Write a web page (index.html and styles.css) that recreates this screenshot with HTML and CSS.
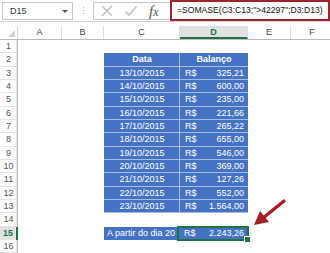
FILE: index.html
```html
<!DOCTYPE html>
<html lang="pt">

<head>
    <title>SOMASE</title>
    <meta charset="UTF-8">
    <meta name="viewport" content="width=device-width, initial-scale=1">
    <link rel="stylesheet" href="styles.css">
</head>

<body>
    <!-- barra de fórmulas -->
    <div class="toolbar">
        <div class="namebox">D15<span class="drop"></span></div>
        <div class="grip"></div>
        <div class="buttons">
            <svg class="icon" width="14" height="14" viewBox="0 0 14 14">
                <path d="M2 2 L12 12 M12 2 L2 12" stroke="#c2c2c2" stroke-width="1.6" fill="none" />
            </svg>
            <svg class="icon" width="14" height="14" viewBox="0 0 14 14">
                <path d="M1.5 7.5 L5 11 L12.5 2.5" stroke="#c2c2c2" stroke-width="1.6" fill="none" />
            </svg>
            <span class="fx">f<span class="x">x</span></span>
        </div>
        <div class="formula">=SOMASE(C3:C13;"&gt;42297";D3:D13)</div>
    </div>

    <div class="sheet">
        <div class="row head">
            <div class="corner"></div>
            <div class="col">A</div>
            <div class="col">B</div>
            <div class="col">C</div>
            <div class="col sel">D</div>
            <div class="col">E</div>
            <div class="col">F</div>
        </div>
        <div class="row">
            <div class="num">1</div><div></div><div></div><div></div><div></div><div></div><div></div>
        </div>
        <div class="row">
            <div class="num">2</div><div></div><div></div>
            <div class="t th">Data</div>
            <div class="t th last">Balanço</div>
            <div></div><div></div>
        </div>
        <div class="row">
            <div class="num">3</div><div></div><div></div>
            <div class="t date">13/10/2015</div>
            <div class="t money last"><span>R$</span><span>325,21</span></div>
            <div></div><div></div>
        </div>
        <div class="row">
            <div class="num">4</div><div></div><div></div>
            <div class="t date">14/10/2015</div>
            <div class="t money last"><span>R$</span><span>600,00</span></div>
            <div></div><div></div>
        </div>
        <div class="row">
            <div class="num">5</div><div></div><div></div>
            <div class="t date">15/10/2015</div>
            <div class="t money last"><span>R$</span><span>235,00</span></div>
            <div></div><div></div>
        </div>
        <div class="row">
            <div class="num">6</div><div></div><div></div>
            <div class="t date">16/10/2015</div>
            <div class="t money last"><span>R$</span><span>221,66</span></div>
            <div></div><div></div>
        </div>
        <div class="row">
            <div class="num">7</div><div></div><div></div>
            <div class="t date">17/10/2015</div>
            <div class="t money last"><span>R$</span><span>265,22</span></div>
            <div></div><div></div>
        </div>
        <div class="row">
            <div class="num">8</div><div></div><div></div>
            <div class="t date">18/10/2015</div>
            <div class="t money last"><span>R$</span><span>655,00</span></div>
            <div></div><div></div>
        </div>
        <div class="row">
            <div class="num">9</div><div></div><div></div>
            <div class="t date">19/10/2015</div>
            <div class="t money last"><span>R$</span><span>546,00</span></div>
            <div></div><div></div>
        </div>
        <div class="row">
            <div class="num">10</div><div></div><div></div>
            <div class="t date">20/10/2015</div>
            <div class="t money last"><span>R$</span><span>369,00</span></div>
            <div></div><div></div>
        </div>
        <div class="row">
            <div class="num">11</div><div></div><div></div>
            <div class="t date">21/10/2015</div>
            <div class="t money last"><span>R$</span><span>127,26</span></div>
            <div></div><div></div>
        </div>
        <div class="row">
            <div class="num">12</div><div></div><div></div>
            <div class="t date">22/10/2015</div>
            <div class="t money last"><span>R$</span><span>552,00</span></div>
            <div></div><div></div>
        </div>
        <div class="row">
            <div class="num">13</div><div></div><div></div>
            <div class="t date">23/10/2015</div>
            <div class="t money last"><span>R$</span><span>1.564,00</span></div>
            <div></div><div></div>
        </div>
        <div class="row">
            <div class="num">14</div><div></div><div></div><div></div><div></div><div></div><div></div>
        </div>
        <div class="row">
            <div class="num active">15</div><div></div><div></div>
            <div class="fill label">A partir do dia 20</div>
            <div class="fill money current"><span>R$</span><span>2.243,26</span></div>
            <div></div><div></div>
        </div>
        <div class="row">
            <div class="num">16</div><div></div><div></div><div></div><div></div><div></div><div></div>
        </div>
    </div>

    <!-- seta desenhada por cima da planilha -->
    <svg class="arrow" width="330" height="253" viewBox="0 0 330 253">
        <line x1="284" y1="201" x2="263" y2="218" stroke="#a51f25" stroke-width="3.4" stroke-linecap="round" />
        <polygon points="254,225 269,222 260,211" fill="#a51f25" />
    </svg>
</body>

</html>
```

FILE: styles.css
```css
* {
    margin: 0px;
    padding: 0px;
    box-sizing: border-box;
}

body {
    width: 330px;
    height: 253px;
    overflow: hidden;
    position: relative;
    background: #fff;
    font-family: "Liberation Sans", Arial, sans-serif;
    font-size: 9px;
    color: #222;
}

/* barra de fórmulas */
.toolbar {
    display: flex;
    align-items: flex-start;
    height: 22px;
    border-bottom: 1px solid #d4d4d4;
}

.namebox {
    width: 71px;
    height: 18px;
    margin: 2px 0 0 2px;
    border: 1px solid #c6c6c6;
    display: flex;
    align-items: center;
    justify-content: space-between;
    padding: 0 4px 0 7px;
    color: #333;
}

.drop {
    border-left: 3px solid transparent;
    border-right: 3px solid transparent;
    border-top: 3px solid #555;
}

.grip {
    width: 20px;
    height: 9px;
    margin-top: 7px;
    background: linear-gradient(to right, transparent 10px, #a8a8a8 10px, #a8a8a8 11px, transparent 11px);
    -webkit-mask: repeating-linear-gradient(to bottom, #000 0 1px, transparent 1px 3px);
    mask: repeating-linear-gradient(to bottom, #000 0 1px, transparent 1px 3px);
}

.buttons {
    width: 77px;
    height: 18px;
    margin-top: 2px;
    border: 1px solid #c6c6c6;
    border-right: none;
    display: flex;
    align-items: center;
    padding-left: 6px;
    gap: 10px;
}

.fx {
    font-family: "Liberation Serif", serif;
    font-style: italic;
    font-size: 15px;
    color: #555;
    margin-left: 1px;
}

.fx .x {
    font-size: 12px;
}

.formula {
    width: 160px;
    height: 21px;
    border: 2px solid #a3232b;
    padding-left: 5px;
    line-height: 17px;
    font-size: 8.6px;
    color: #111;
    white-space: nowrap;
}

/* planilha */
.sheet {
    margin-top: 4px;
}

.row {
    display: grid;
    grid-template-columns: 18px 44px 42px 76px 68px 43px 43px;
    grid-template-rows: 100%;
    height: 13px;
}

.row > div {
    min-height: 0;
    overflow: hidden;
}

/* linhas 2, 5, 8, 11 e 14 ficam com 14px para dar a média de 13,33px */
.row:nth-child(3n) {
    height: 14px;
}

.row.head {
    height: 14px;
    border-bottom: 1px solid #bcbcbc;
}

.corner {
    border-right: 1px solid #d4d4d4;
    position: relative;
}

.corner::after {
    content: "";
    position: absolute;
    right: 2px;
    bottom: 2px;
    border-left: 7px solid transparent;
    border-bottom: 7px solid #d2d2d2;
}

.col {
    text-align: center;
    line-height: 13px;
    color: #444;
    border-right: 1px solid #dedede;
}

.col.sel {
    background: #e1e1e1;
    color: #217346;
    font-weight: bold;
    border-bottom: 2px solid #217346;
    line-height: 12px;
}

.num {
    text-align: center;
    line-height: 13px;
    color: #555;
    box-shadow: inset -1px -1px 0 #e6e6e6;
    border-right: 1px solid #bcbcbc;
}

.num.active {
    background: #e1e1e1;
    color: #217346;
    font-weight: bold;
    border-right: 2px solid #217346;
}

/* tabela azul */
.t,
.fill {
    background: #4472c4;
    color: #fff;
    line-height: 12px;
    white-space: nowrap;
}

.t {
    box-shadow: inset -1px -1px 0 #a9bce2;
}

.t.last {
    box-shadow: inset 0 -1px 0 #a9bce2;
}

.th {
    font-weight: bold;
    text-align: center;
}

.date {
    text-align: center;
}

.money {
    display: flex;
    justify-content: space-between;
    padding: 0 4px 0 5px;
}

.label {
    padding-left: 3px;
    line-height: 13px;
}

.row > .current {
    overflow: visible;
    line-height: 13px;
    position: relative;
    margin-left: -2px;
    padding-left: 6px;
    outline: 2px solid #217346;
    outline-offset: -1px;
}

.current::after {
    content: "";
    position: absolute;
    right: -3px;
    bottom: -3px;
    width: 5px;
    height: 5px;
    background: #217346;
    border: 1px solid #fff;
}

.arrow {
    position: absolute;
    left: 0;
    top: 0;
}
```
